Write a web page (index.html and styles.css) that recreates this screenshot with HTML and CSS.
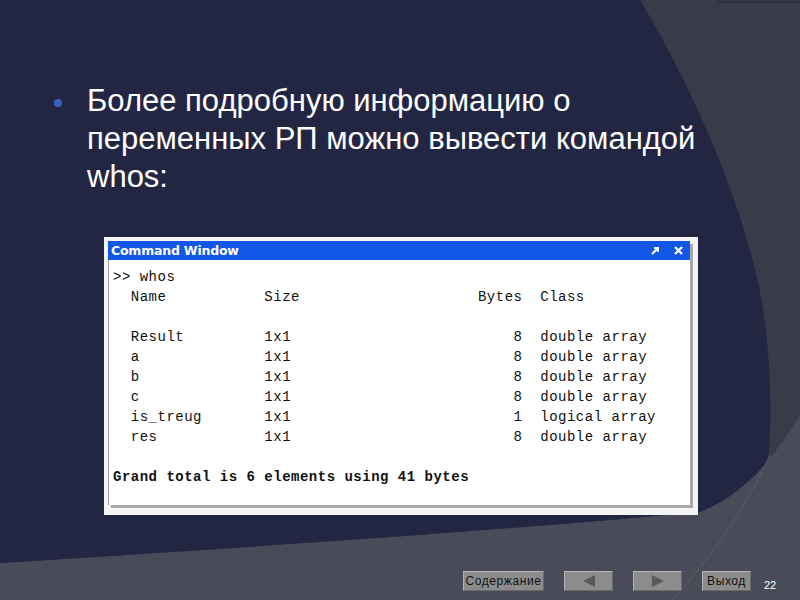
FILE: index.html
```html
<!DOCTYPE html>
<html lang="ru">
<head>
<meta charset="utf-8">
<link rel="stylesheet" href="styles.css">
</head>
<body>
<div class="slide">
  <svg class="bg" width="800" height="600" viewBox="0 0 800 600">
    <rect x="0" y="0" width="800" height="600" fill="#393b49"/>
    <path d="M0,563 C200,550 450,535 700,512 C730,500 760,480 800,415 L800,600 L0,600 Z" fill="#494b59"/>
    <path d="M0,0 H640 C700,100 755,230 766,330 C772,390 771,430 768,461 C745,488 722,503 700,512 C450,535 200,550 0,563 Z" fill="#232643"/>
    <path d="M770,455 C740,520 700,570 672,600" fill="none" stroke="#5b5d6b" stroke-width="1"/>
    <path d="M718,2 H800" fill="none" stroke="#2c2f3d" stroke-width="2"/>
  </svg>

  <ul class="points">
    <li class="point">Более подробную информацию о переменных РП можно вывести командой whos:</li>
  </ul>

  <div class="cmd-frame">
    <div class="cmd">
      <div class="cmd-title">
        <span class="cmd-name">Command Window</span>
        <span class="cmd-icons">
          <svg width="10" height="10" viewBox="0 0 10 10"><path d="M2,8 L7,3 M4,2 H8 V6" stroke="#fff" stroke-width="2" fill="none"/></svg>
          <svg width="11" height="11" viewBox="0 0 11 11"><path d="M2,2 L9,9 M9,2 L2,9" stroke="#fff" stroke-width="2.2" fill="none"/></svg>
        </span>
      </div>
<pre class="cmd-body">&gt;&gt; whos
  Name           Size                    Bytes  Class

  Result         1x1                         8  double array
  a              1x1                         8  double array
  b              1x1                         8  double array
  c              1x1                         8  double array
  is_treug       1x1                         1  logical array
  res            1x1                         8  double array

<b>Grand total is 6 elements using 41 bytes</b></pre>
    </div>
  </div>

  <div class="nav">
    <span class="btn btn-text">Содержание</span>
    <span class="btn btn-arrow"><span class="tri tri-left"></span></span>
    <span class="btn btn-arrow"><span class="tri tri-right"></span></span>
    <span class="btn btn-text btn-exit">Выход</span>
    <span class="page-num">22</span>
  </div>
</div>
</body>
</html>
```

FILE: styles.css
```css
html, body {
  margin: 0;
  padding: 0;
}
body {
  width: 800px;
  height: 600px;
  overflow: hidden;
  background: #232643;
}
.slide {
  position: relative;
  width: 800px;
  height: 600px;
  display: flex;
  flex-direction: column;
  align-items: flex-start;
}
.bg {
  position: absolute;
  left: 0;
  top: 0;
  z-index: 0;
}
.points {
  position: relative;
  z-index: 1;
  list-style: none;
  margin: 82px 0 0 0;
  padding: 0 0 0 87px;
  width: 650px;
}
.point {
  position: relative;
  font-family: "Liberation Sans", Arial, sans-serif;
  font-size: 31px;
  line-height: 38px;
  color: #ffffff;
}
.point::before {
  content: "";
  position: absolute;
  left: -33px;
  top: 17px;
  width: 8px;
  height: 8px;
  border-radius: 50%;
  background: #3d5fc4;
}
.cmd-frame {
  position: relative;
  z-index: 1;
  margin: 41px 0 0 104px;
  width: 582px;
  padding: 4px 8px 10px 4px;
  background: #f4f4f4;
}
.cmd {
  background: #ffffff;
  border-left: 1px solid #9a9a9a;
  box-shadow: 3px 3px 0 #a8a8a8;
}
.cmd-title {
  height: 19px;
  background: #1257e6;
  display: flex;
  align-items: center;
  justify-content: space-between;
  padding: 0 6px 0 3px;
  margin-left: -1px;
}
.cmd-name {
  font-family: "DejaVu Sans", Tahoma, sans-serif;
  font-weight: bold;
  font-size: 12.5px;
  color: #ffffff;
  letter-spacing: -0.2px;
}
.cmd-icons {
  display: flex;
  align-items: center;
  gap: 13px;
}
.cmd-icons svg {
  display: block;
}
.cmd-body {
  margin: 0;
  padding: 7px 0 18px 4px;
  font-family: "Liberation Mono", "Courier New", monospace;
  font-size: 14px;
  letter-spacing: 0.5px;
  line-height: 20px;
  color: #111111;
  white-space: pre;
}
.cmd-body b {
  font-weight: bold;
}
.nav {
  position: relative;
  z-index: 1;
  margin: auto 0 9px 463px;
  display: flex;
  align-items: center;
  gap: 20px;
}
.btn {
  height: 20px;
  box-sizing: border-box;
  background: #8c8c8c;
  border-top: 1px solid #b4b4b4;
  border-left: 1px solid #b4b4b4;
  border-right: 1px solid #6a6a6a;
  border-bottom: 1px solid #6a6a6a;
  display: flex;
  align-items: center;
  justify-content: center;
  font-family: "Liberation Sans", Arial, sans-serif;
  font-size: 12px;
  color: #111111;
  letter-spacing: 0.6px;
}
.btn-text {
  width: 81px;
}
.btn-exit {
  width: 49px;
}
.btn-arrow {
  width: 49px;
}
.tri {
  width: 0;
  height: 0;
  border-top: 6px solid transparent;
  border-bottom: 6px solid transparent;
}
.tri-left {
  border-right: 12px solid #5a5a5a;
}
.tri-right {
  border-left: 12px solid #5a5a5a;
}
.page-num {
  font-family: "Liberation Sans", Arial, sans-serif;
  font-size: 11px;
  color: #ffffff;
  margin-left: -7px;
  margin-top: 8px;
}
```
